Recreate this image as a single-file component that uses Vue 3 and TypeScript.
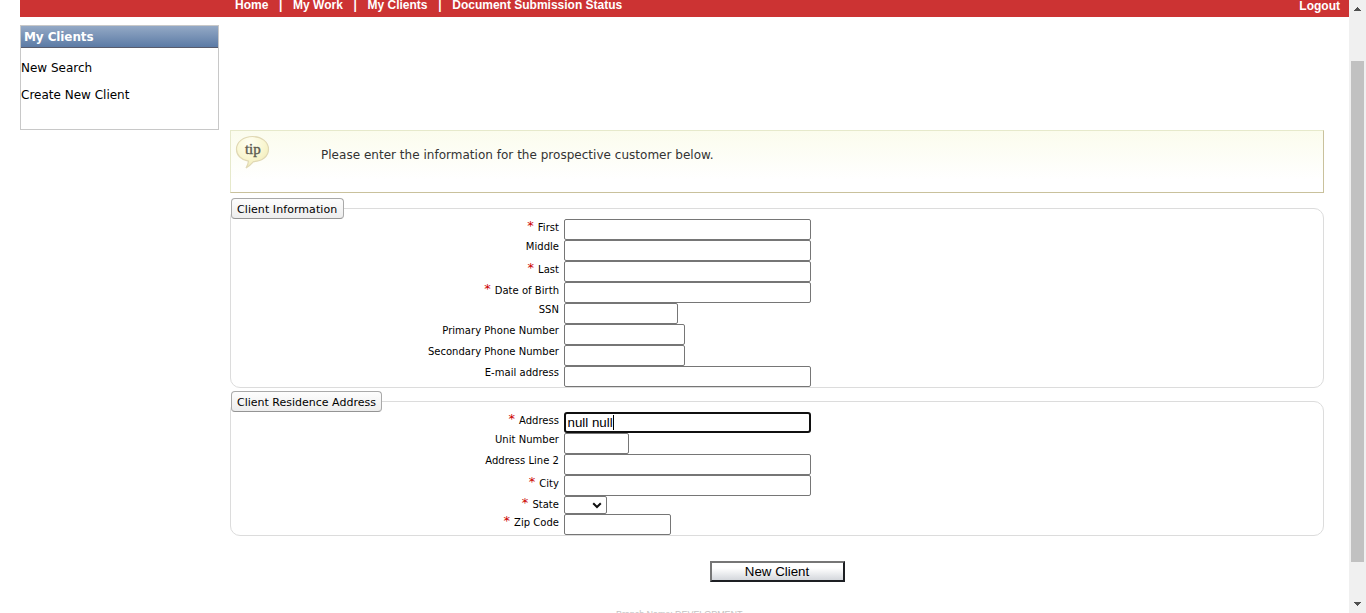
<script setup lang="ts">
interface Field {
  label: string
  width: number
  required?: boolean
  value?: string
  kind?: 'select'
}

interface Group {
  title: string
  name: string
  fields: Field[]
}

const nav: string[] = ['Home', 'My Work', 'My Clients', 'Document Submission Status']

const groups: Group[] = [
  {
    title: 'Client Information',
    name: 'info',
    fields: [
      { label: 'First', width: 247, required: true },
      { label: 'Middle', width: 247 },
      { label: 'Last', width: 247, required: true },
      { label: 'Date of Birth', width: 247, required: true },
      { label: 'SSN', width: 114 },
      { label: 'Primary Phone Number', width: 121 },
      { label: 'Secondary Phone Number', width: 121 },
      { label: 'E-mail address', width: 247 },
    ],
  },
  {
    title: 'Client Residence Address',
    name: 'residence',
    fields: [
      { label: 'Address', width: 247, required: true, value: 'null null' },
      { label: 'Unit Number', width: 65 },
      { label: 'Address Line 2', width: 247 },
      { label: 'City', width: 247, required: true },
      { label: 'State', width: 43, required: true, kind: 'select' },
      { label: 'Zip Code', width: 107, required: true },
    ],
  },
]
</script>

<template>
  <div class="window">
    <div class="page">
      <header class="topbar">
        <nav>
          <template v-for="(item, i) in nav" :key="item">
            <span v-if="i" class="sep">|</span>
            <a>{{ item }}</a>
          </template>
        </nav>
        <a class="logout">Logout</a>
      </header>

      <div class="body">
        <aside class="side">
          <h2>My Clients</h2>
          <a>New Search</a>
          <a>Create New Client</a>
        </aside>

        <main>
          <section class="tip">
            <svg class="bubble" width="36" height="36" viewBox="0 0 36 36">
              <defs>
                <radialGradient id="bubbleFill" cx="0.4" cy="0.2" r="0.8">
                  <stop offset="0" stop-color="#fffff4" />
                  <stop offset="0.6" stop-color="#f9f6d0" />
                  <stop offset="1" stop-color="#f1ebb8" />
                </radialGradient>
              </defs>
              <path
                d="M17.5 1.5C26.5 1.5 33.5 7 33.5 14.2C33.5 21.4 27 26.3 18.5 26.6C16 29.5 13.5 31.5 11 33C12.4 30.8 13.3 28.4 13.4 26.2C6.3 24.8 1.5 20.3 1.5 14.2C1.5 7 8.5 1.5 17.5 1.5Z"
                fill="url(#bubbleFill)" stroke="#e0d8b4" stroke-width="1.2"
              />
              <text x="17.8" y="18.6" text-anchor="middle" class="tiptext">tip</text>
            </svg>
            <p>Please enter the information for the prospective customer below.</p>
          </section>

          <section v-for="group in groups" :key="group.name" class="group" :class="group.name">
            <div class="legend">{{ group.title }}</div>
            <div class="fields">
              <div
                v-for="field in group.fields"
                :key="field.label"
                class="row"
                :class="{ short: field.kind === 'select' }"
              >
                <label :class="{ required: field.required }">
                  <i v-if="field.required">*</i><span>{{ field.label }}</span>
                </label>
                <div class="control" :class="{ focused: field.value }" :style="{ width: field.width + 'px' }">
                  <template v-if="field.value"><span>{{ field.value }}</span><b class="caret"></b></template>
                  <svg v-if="field.kind === 'select'" width="10" height="7" viewBox="0 0 10 7">
                    <path d="M1.2 1.2L5 5L8.8 1.2" fill="none" stroke="#101010" stroke-width="2" />
                  </svg>
                </div>
              </div>
            </div>
          </section>

          <button type="button">New Client</button>
        </main>
      </div>

      <footer>Branch Name: DEVELOPMENT</footer>
    </div>

    <div class="scrollbar">
      <svg class="up" width="7" height="4" viewBox="0 0 7 4" shape-rendering="crispEdges">
        <path d="M3 0h1v1h1v1h1v1h1v1H0V3h1V2h1V1h1z" fill="#505050" />
      </svg>
      <div class="thumb"></div>
      <svg class="down" width="7" height="4" viewBox="0 0 7 4" shape-rendering="crispEdges">
        <path d="M0 0h7v1H6v1H5v1H4v1H3V3H2V2H1V1H0z" fill="#505050" />
      </svg>
    </div>
  </div>
</template>

<style>
html,
body {
  overflow: hidden;
  background: #fff;
}
</style>

<style scoped>
* {
  box-sizing: border-box;
}
.window {
  display: flex;
  width: 1366px;
  height: 613px;
  overflow: hidden;
  font-family: Verdana, 'DejaVu Sans', sans-serif;
  color: #000;
}
.page {
  width: 1349px;
  height: 613px;
  overflow: hidden;
}
.topbar {
  display: flex;
  justify-content: space-between;
  height: 17px;
  margin-left: 20px;
  padding: 0 9px 0 215px;
  background: #cc3333;
  color: #fff;
  font: bold 12px/10px 'Liberation Sans', Arial, sans-serif;
  white-space: nowrap;
}
.topbar nav {
  display: flex;
}
.topbar .sep {
  width: 24.7px;
  text-align: center;
}
.logout {
  margin-top: 1px;
}
.body {
  display: flex;
  align-items: flex-start;
  padding: 8px 0 0 20px;
}
.side {
  display: flex;
  flex-direction: column;
  width: 199px;
  height: 105px;
  border: 1px solid #c8c8c8;
  font-size: 12px;
  line-height: 16px;
  white-space: nowrap;
}
.side h2 {
  height: 22px;
  margin: 0 0 12px;
  padding-left: 3px;
  border-bottom: 1px solid #585c6c;
  background: linear-gradient(#94a9c5, #5c7ba6);
  color: #fff;
  font-size: 12px;
  line-height: 22px;
  letter-spacing: -0.1px;
}
.side a + a {
  margin-top: 11px;
}
main {
  display: flex;
  flex-direction: column;
  width: 1094px;
  margin: 105px 0 0 11px;
}
.tip {
  display: flex;
  height: 63px;
  border: 1px solid;
  border-color: #e6e9cb #c9c19c #c9c19c #e6e9cb;
  background: linear-gradient(#fbfced, #fff 80%);
}
.bubble {
  flex: none;
  margin: 4px 0 0 4px;
}
.tiptext {
  font: 15px 'Liberation Serif', serif;
  fill: #5d5c50;
  stroke: #5d5c50;
  stroke-width: 0.4px;
}
.tip p {
  margin: 16px 0 0 50px;
  color: #333;
  font-size: 12px;
  line-height: 16px;
  letter-spacing: 0.02px;
  white-space: nowrap;
}
.group {
  display: flex;
  flex-direction: column;
  margin-top: 5px;
}
.group + .group {
  margin-top: 3px;
}
.legend {
  z-index: 1;
  align-self: flex-start;
  height: 21px;
  margin: 0 0 -11px 1px;
  border: 1px solid #a9a9a9;
  border-bottom-color: #949494;
  border-radius: 4px;
  background: linear-gradient(#fdfdfd, #ededed);
  padding-left: 5px;
  font-size: 11px;
  line-height: 21px;
  white-space: nowrap;
}
.info .legend {
  width: 113px;
  letter-spacing: 0.07px;
}
.residence .legend {
  width: 151px;
}
.fields {
  border: 1px solid #dcdcdc;
  border-radius: 10px;
  padding-top: 10px;
}
.row {
  display: flex;
  height: 21px;
}
.row.short {
  height: 18px;
}
label {
  display: flex;
  justify-content: flex-end;
  width: 328px;
  margin-right: 5px;
  font-size: 10px;
  line-height: 13px;
  letter-spacing: 0.03px;
  white-space: nowrap;
}
label.required {
  padding-top: 2px;
}
label i {
  margin: -2px 4px 0 0;
  color: #c00;
  font-size: 13px;
  font-style: normal;
}
.control {
  display: flex;
  border: 1px solid #767676;
  border-radius: 2px;
  background: #fff;
  font: 13.33px/19px 'Liberation Sans', Arial, sans-serif;
}
.control.focused {
  border: 2px solid #101010;
  border-radius: 3px;
  padding-left: 1.5px;
  line-height: 17px;
}
.control svg {
  margin: 5px 0 0 27px;
}
.caret {
  width: 1px;
  height: 15px;
  margin-top: 1px;
  background: #000;
}
button {
  align-self: center;
  width: 135px;
  height: 21px;
  margin-top: 25px;
  padding: 0;
  border: 2px solid;
  border-color: #767676 #1d1f23 #1d1f23 #767676;
  background: linear-gradient(#fff 30%, #d4d7dc);
  color: #000;
  font: 13.33px/17px 'Liberation Sans', Arial, sans-serif;
}
footer {
  margin: 27px 0 0 616px;
  height: 4px;
  color: #c3c3c3;
  font: 9px/11px 'Liberation Sans', Arial, sans-serif;
  letter-spacing: -0.07px;
  white-space: nowrap;
}
.scrollbar {
  display: flex;
  flex-direction: column;
  align-items: center;
  width: 17px;
  height: 613px;
  background: #f0f0f0;
}
.up {
  margin-top: 7px;
}
.thumb {
  width: 13px;
  height: 501px;
  margin: 50px 0 40px;
  background: #c1c1c1;
}
.up,
.down {
  flex: none;
}
</style>
